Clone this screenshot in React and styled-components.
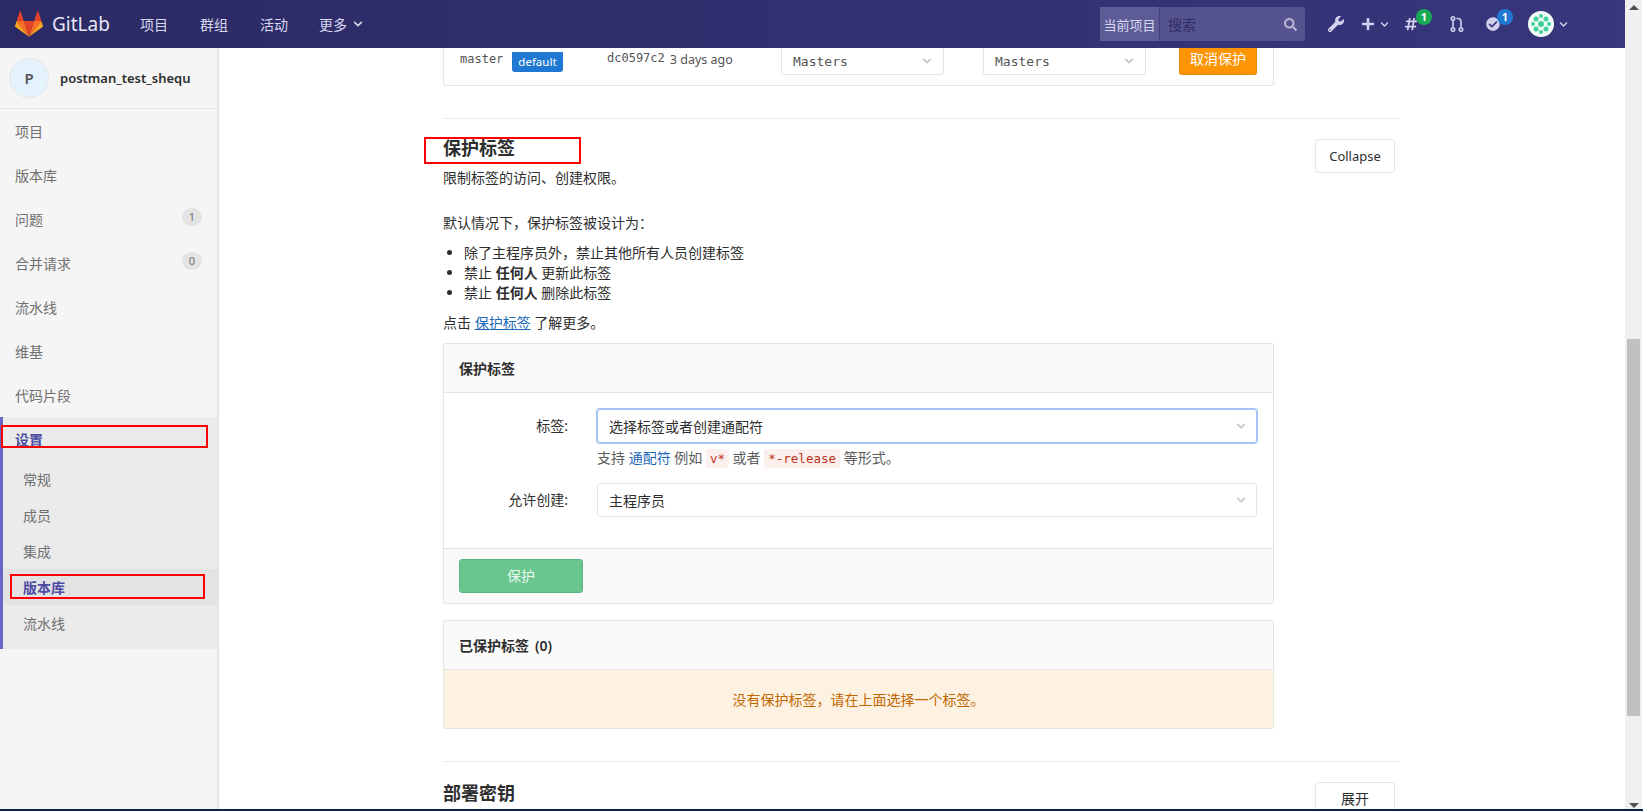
import React from 'react';
import styled, { createGlobalStyle } from 'styled-components';
import { FaWrench, FaPlus, FaHashtag, FaChevronDown, FaSearch, FaCheckCircle } from 'react-icons/fa';

const sans = `"Noto Sans", "Noto Sans CJK SC", sans-serif`;
const mono = `"DejaVu Sans Mono", "Liberation Mono", monospace`;

const GlobalStyle = createGlobalStyle`
  html, body {
    margin: 0;
    height: 811px;
    overflow: hidden;
    background: #fff;
    font-family: ${sans};
    font-size: 14px;
    color: #2e2e2e;
  }
  * { box-sizing: border-box; }
`;

const Page = styled.div`
  display: flex;
  flex-direction: column;
  height: 811px;
`;

const Window = styled.div`
  display: flex;
  flex: 1;
  min-height: 0;
`;

const Viewport = styled.div`
  display: flex;
  flex-direction: column;
  width: 1625px;
  min-height: 0;
`;

const BottomEdge = styled.div`
  height: 2px;
  background: #0a2440;
`;

/* top nav */
const NavBar = styled.div`
  display: flex;
  align-items: center;
  flex: none;
  height: 48px;
  padding-left: 15px;
  background: linear-gradient(90deg, #2c2a64, #38367c);
  color: #d8d8f0;
`;

const Brand = styled.div`
  display: flex;
  align-items: center;
  gap: 9px;
  width: 125px;
  color: #e6e6f6;
  font-size: 19px;
`;

const NavLink = styled.div`
  display: flex;
  align-items: center;
  gap: 6px;
  width: ${p => p.$w || 60}px;
  font-size: 14px;
`;

const SearchBox = styled.div`
  display: flex;
  width: 205px;
  height: 34px;
  margin-left: auto;
  border-radius: 3px;
  background: #56548f;
`;

const ScopeTag = styled.div`
  display: flex;
  align-items: center;
  justify-content: center;
  width: 60px;
  border-right: 1px solid #3f3d7e;
  background: #5e5c96;
  font-size: 13px;
`;

const SearchInput = styled.div`
  display: flex;
  align-items: center;
  justify-content: space-between;
  flex: 1;
  padding: 0 8px;
  color: #2f2d66;
  font-size: 14px;
  svg { color: #b5b4d2; }
`;

const NavIcons = styled.div`
  display: flex;
  align-items: center;
  width: 320px;
  padding-left: 23px;
  color: #d2d2ee;
`;

const IconSlot = styled.div`
  position: relative;
  display: flex;
  align-items: center;
  gap: 5px;
  width: ${p => p.$w}px;
`;

const NavBadge = styled.span`
  position: absolute;
  top: -8px;
  left: ${p => p.$left}px;
  width: 16px;
  height: 16px;
  border-radius: 50%;
  background: ${p => p.$color};
  color: #fff;
  font-size: 11px;
  font-weight: 700;
  line-height: 16px;
  text-align: center;
`;

/* layout */
const Body = styled.div`
  display: flex;
  flex: 1;
  min-height: 0;
`;

const Sidebar = styled.div`
  position: relative;
  flex: none;
  width: 219px;
  border-right: 2px solid #e5e5e5;
  background: #f5f5f5;
`;

const ProjectHead = styled.div`
  display: flex;
  align-items: center;
  gap: 11px;
  height: 61px;
  padding-left: 9px;
  border-bottom: 1px solid #e5e5e5;
  font-size: 13px;
  font-weight: 600;
`;

const ProjectAvatar = styled.div`
  display: flex;
  align-items: center;
  justify-content: center;
  width: 40px;
  height: 40px;
  border: 1px solid #e5e5e5;
  border-radius: 50%;
  background: #e4f2fc;
  color: #555;
  font-size: 15px;
`;

const SideItem = styled.div`
  display: flex;
  align-items: center;
  justify-content: space-between;
  height: 44px;
  padding: 0 15px;
  color: #707070;
`;

const Count = styled.span`
  width: 20px;
  height: 18px;
  margin-top: -4px;
  border-radius: 9px;
  background: #e3e3e3;
  font-size: 11px;
  line-height: 18px;
  text-align: center;
`;

const SideGroup = styled.div`
  position: relative;
  padding-bottom: 8px;
  border-left: 3px solid #6666c4;
  background: #ebebeb;
`;

const GroupTitle = styled.div`
  display: flex;
  align-items: center;
  height: 44px;
  padding-left: 12px;
  color: #4b4ba3;
  font-weight: 700;
`;

const SubItem = styled.div`
  display: flex;
  align-items: center;
  height: 36px;
  padding-left: 20px;
  background: ${p => (p.$active ? '#e3e3e3' : 'transparent')};
  color: ${p => (p.$active ? '#4b4ba3' : '#707070')};
  font-weight: ${p => (p.$active ? 700 : 400)};
`;

const RedBox = styled.div`
  position: absolute;
  left: ${p => p.$left}px;
  top: ${p => p.$top}px;
  width: ${p => p.$w}px;
  height: ${p => p.$h}px;
  border: 2px solid #f00;
`;

const Main = styled.div`
  flex: 1;
  min-width: 0;
  overflow: hidden;
  padding-left: 224px;
`;

const Content = styled.div`
  width: 957px;
`;

/* branch row cut off by the nav */
const BranchPanel = styled.div`
  display: grid;
  grid-template-columns: 147px 174px 202px 196px 78px;
  width: 831px;
  height: 38px;
  padding-left: 16px;
  border: 1px solid #e5e5e5;
  border-top: 0;
  border-radius: 0 0 3px 3px;
`;

const BranchCell = styled.div`
  display: flex;
  align-items: flex-start;
  gap: 9px;
  padding-top: ${p => p.$top || 0}px;
  font-family: ${mono};
  font-size: 12px;
  color: #555;
`;

const CommitDate = styled.span`
  margin-left: -4px;
  font-family: ${sans};
  font-size: 12.5px;
`;

const DefaultTag = styled.span`
  height: 20px;
  padding: 0 6px;
  border-radius: 0 0 3px 3px;
  background: #1f78d1;
  color: #fff;
  font-family: ${sans};
  font-size: 11.5px;
  line-height: 19px;
`;

const CutSelect = styled.div`
  display: flex;
  align-items: center;
  justify-content: space-between;
  width: 163px;
  height: 27px;
  padding: 0 11px;
  border: 1px solid #e5e5e5;
  border-top: 0;
  border-radius: 0 0 3px 3px;
  color: #555;
  font-size: 13px;
  svg { color: #c4c4c4; }
`;

const UnprotectButton = styled.div`
  width: 78px;
  height: 27px;
  border: 1px solid #e58a0a;
  border-top: 0;
  border-radius: 0 0 3px 3px;
  background: #fc9403;
  color: #fff;
  font-family: ${sans};
  font-size: 14px;
  line-height: 22px;
  text-align: center;
`;

/* settings sections */
const Section = styled.section`
  position: relative;
  margin-top: 32px;
  padding-top: ${p => p.$top}px;
  border-top: 1px solid #ececec;
`;

const SectionTitle = styled.h4`
  margin: 0;
  font-family: "Liberation Serif", "Noto Sans CJK SC", serif;
  font-size: 18px;
  font-weight: 600;
  line-height: 24px;
`;

const SectionButton = styled.div`
  position: absolute;
  top: ${p => p.$top}px;
  right: 5px;
  width: 80px;
  height: 34px;
  border: 1px solid #e5e5e5;
  border-radius: 3px;
  background: #fff;
  font-size: ${p => p.$size}px;
  line-height: 32px;
  text-align: center;
`;

const Text = styled.p`
  margin: ${p => p.$top || 0}px 0 0;
  line-height: 20px;
`;

const RuleList = styled.ul`
  margin: 10px 0 0;
  padding-left: 21px;
  line-height: 20px;
  li { padding-left: 0; }
`;

const BlueLink = styled.span`
  color: #1b69b6;
  text-decoration: ${p => (p.$under ? 'underline' : 'none')};
`;

const Panel = styled.div`
  width: 831px;
  margin-top: ${p => p.$top}px;
  border: 1px solid #e5e5e5;
  border-radius: 2px;
`;

const PanelHead = styled.div`
  display: flex;
  align-items: center;
  gap: 6px;
  height: 49px;
  padding-left: 15px;
  border-bottom: 1px solid #e5e5e5;
  background: #fafafa;
  font-weight: 700;
`;

const HeadCount = styled.span`
  font-weight: 600;
`;

const FormBody = styled.div`
  display: grid;
  grid-template-columns: 124px 1fr;
  column-gap: 29px;
  align-content: start;
  height: 155px;
  padding: 16px 16px 0 0;
`;

const FieldLabel = styled.label`
  padding-top: 7px;
  text-align: right;
  line-height: 20px;
`;

const Select = styled.div`
  display: flex;
  align-items: center;
  justify-content: space-between;
  height: 34px;
  padding: 0 10px 0 11px;
  border: 1px solid ${p => (p.$focus ? '#a3c4f5' : '#e5e5e5')};
  border-radius: 3px;
  box-shadow: ${p => (p.$focus ? '0 0 0 1px #a3c4f5' : 'none')};
  svg { color: #c4c4c4; }
`;

const HelpText = styled.div`
  grid-column: 2;
  height: 40px;
  padding-top: 5px;
  color: #5c5c5c;
  line-height: 20px;
`;

const InlineCode = styled.code`
  padding: 2px 4px;
  border-radius: 3px;
  background: #fbf0ee;
  color: #c0341d;
  font-family: ${mono};
  font-size: 12.5px;
`;

const FormFoot = styled.div`
  height: 55px;
  padding: 10px 15px;
  border-top: 1px solid #e5e5e5;
  background: #fafafa;
`;

const SaveButton = styled.div`
  width: 124px;
  height: 34px;
  border: 1px solid #5eb583;
  border-radius: 3px;
  background: #69c68e;
  color: #eafaf0;
  line-height: 32px;
  text-align: center;
`;

const EmptyNotice = styled.div`
  display: flex;
  align-items: center;
  justify-content: center;
  height: 58px;
  background: #fdf1e1;
  color: #c26700;
`;

/* browser scrollbar */
const ScrollBar = styled.div`
  display: flex;
  flex-direction: column;
  align-items: center;
  flex: none;
  width: 17px;
  padding-top: 5px;
  background: #f0f0f0;
`;

const ScrollArrow = styled.div`
  width: 0;
  height: 0;
  border-left: 5px solid transparent;
  border-right: 5px solid transparent;
  border-${p => (p.$up ? 'bottom' : 'top')}: 5px solid #505050;
`;

const ScrollThumb = styled.div`
  width: 13px;
  height: 377px;
  margin: 329px 0 87px;
  background: #c0c0c0;
`;

const Tanuki = () => (
  <svg width="28" height="26" viewBox="0 0 210 195">
    <path d="M105 194L144 75H66z" fill="#e24329" />
    <path d="M105 194L66 75H12z" fill="#fc6d26" />
    <path d="M12 75L.5 111c-1 3.300.1 6.900 2.900 8.900L105 194z" fill="#fca326" />
    <path d="M12 75h54L43 3.200c-1.200-3.700-6.400-3.700-7.600 0z" fill="#e24329" />
    <path d="M105 194l39-119h54z" fill="#fc6d26" />
    <path d="M198 75l11.600 36c1 3.300-.1 6.900-2.900 8.900L105 194z" fill="#fca326" />
    <path d="M198 75h-54l23-71.800c1.200-3.700 6.400-3.700 7.600 0z" fill="#e24329" />
  </svg>
);

const MergeIcon = () => (
  <svg width="14" height="16" viewBox="0 0 14 16" fill="none" stroke="currentColor" strokeWidth="1.6">
    <circle cx="3" cy="2.500" r="1.700" />
    <circle cx="3" cy="13.500" r="1.700" />
    <circle cx="11" cy="13.500" r="1.700" />
    <path d="M3 4.500V11.500M11 11.500V5.500C11 3.500 10 2.500 8 2.500H6.500" />
  </svg>
);

const Identicon = () => (
  <svg width="26" height="26" viewBox="0 0 26 26">
    <circle cx="13" cy="13" r="13" fill="#f2fbf7" />
    {[[13, 13, 3], [8, 8, 2.500], [18, 8, 2.500], [8, 18, 2.500], [18, 18, 2.500], [13, 5, 2], [13, 21, 2], [5, 13, 2], [21, 13, 2]].map(([x, y, r]) => (
      <circle key={`${x}-${y}`} cx={x} cy={y} r={r} fill="#3fd39b" />
    ))}
  </svg>
);

const sideItems = [
  ['项目'], ['版本库'], ['问题', 1], ['合并请求', 0], ['流水线'], ['维基'], ['代码片段'],
];

const subItems = ['常规', '成员', '集成', '版本库', '流水线'];

export default function App() {
  return (
    <Page>
      <GlobalStyle />
      <Window>
        <Viewport>
          <NavBar>
            <Brand><Tanuki />GitLab</Brand>
            <NavLink>项目</NavLink>
            <NavLink>群组</NavLink>
            <NavLink $w={59}>活动</NavLink>
            <NavLink>更多<FaChevronDown size={10} /></NavLink>
            <SearchBox>
              <ScopeTag>当前项目</ScopeTag>
              <SearchInput>搜索<FaSearch size={13} /></SearchInput>
            </SearchBox>
            <NavIcons>
              <IconSlot $w={33}><FaWrench size={16} /></IconSlot>
              <IconSlot $w={43}><FaPlus size={14} /><FaChevronDown size={9} /></IconSlot>
              <IconSlot $w={46}><FaHashtag size={14} /><NavBadge $color="#1aaa55" $left={12}>1</NavBadge></IconSlot>
              <IconSlot $w={36}><MergeIcon /></IconSlot>
              <IconSlot $w={42}><FaCheckCircle size={14} /><NavBadge $color="#1f78d1" $left={11}>1</NavBadge></IconSlot>
              <IconSlot $w={40}><Identicon /><FaChevronDown size={9} /></IconSlot>
            </NavIcons>
          </NavBar>
          <Body>
            <Sidebar>
              <ProjectHead>
                <ProjectAvatar>P</ProjectAvatar>
                postman_test_shequ
              </ProjectHead>
              {sideItems.map(([label, count]) => (
                <SideItem key={label}>
                  {label}
                  {count !== undefined && <Count>{count}</Count>}
                </SideItem>
              ))}
              <SideGroup>
                <GroupTitle>设置</GroupTitle>
                <RedBox $left={-2} $top={8} $w={207} $h={23} />
                {subItems.map(label => (
                  <SubItem key={label} $active={label === '版本库'}>{label}</SubItem>
                ))}
                <RedBox $left={7} $top={157} $w={195} $h={25} />
              </SideGroup>
            </Sidebar>
            <Main>
              <Content>
                <BranchPanel>
                  <BranchCell $top={4}>master<DefaultTag>default</DefaultTag></BranchCell>
                  <BranchCell $top={3}>dc0597c2<CommitDate>3 days ago</CommitDate></BranchCell>
                  <BranchCell><CutSelect>Masters<FaChevronDown size={10} /></CutSelect></BranchCell>
                  <BranchCell><CutSelect>Masters<FaChevronDown size={10} /></CutSelect></BranchCell>
                  <BranchCell><UnprotectButton>取消保护</UnprotectButton></BranchCell>
                </BranchPanel>

                <Section $top={18}>
                  <SectionTitle>保护标签</SectionTitle>
                  <RedBox $left={-19} $top={18} $w={157} $h={27} />
                  <SectionButton $top={20} $size={13}>Collapse</SectionButton>
                  <Text $top={7}>限制标签的访问、创建权限。</Text>
                  <Text $top={25}>默认情况下，保护标签被设计为：</Text>
                  <RuleList>
                    <li>除了主程序员外，禁止其他所有人员创建标签</li>
                    <li>禁止 <b>任何人</b> 更新此标签</li>
                    <li>禁止 <b>任何人</b> 删除此标签</li>
                  </RuleList>
                  <Text $top={10}>点击 <BlueLink $under>保护标签</BlueLink> 了解更多。</Text>

                  <Panel $top={10}>
                    <PanelHead>保护标签</PanelHead>
                    <FormBody>
                      <FieldLabel>标签:</FieldLabel>
                      <Select $focus>选择标签或者创建通配符<FaChevronDown size={10} /></Select>
                      <HelpText>
                        支持 <BlueLink>通配符</BlueLink> 例如 <InlineCode>v*</InlineCode> 或者 <InlineCode>*-release</InlineCode> 等形式。
                      </HelpText>
                      <FieldLabel>允许创建:</FieldLabel>
                      <Select>主程序员<FaChevronDown size={10} /></Select>
                    </FormBody>
                    <FormFoot><SaveButton>保护</SaveButton></FormFoot>
                  </Panel>

                  <Panel $top={16}>
                    <PanelHead>已保护标签 <HeadCount>(0)</HeadCount></PanelHead>
                    <EmptyNotice>没有保护标签，请在上面选择一个标签。</EmptyNotice>
                  </Panel>
                </Section>

                <Section $top={20}>
                  <SectionTitle>部署密钥</SectionTitle>
                  <SectionButton $top={20} $size={14}>展开</SectionButton>
                </Section>
              </Content>
            </Main>
          </Body>
        </Viewport>
        <ScrollBar>
          <ScrollArrow $up />
          <ScrollThumb />
          <ScrollArrow />
        </ScrollBar>
      </Window>
      <BottomEdge />
    </Page>
  );
}
